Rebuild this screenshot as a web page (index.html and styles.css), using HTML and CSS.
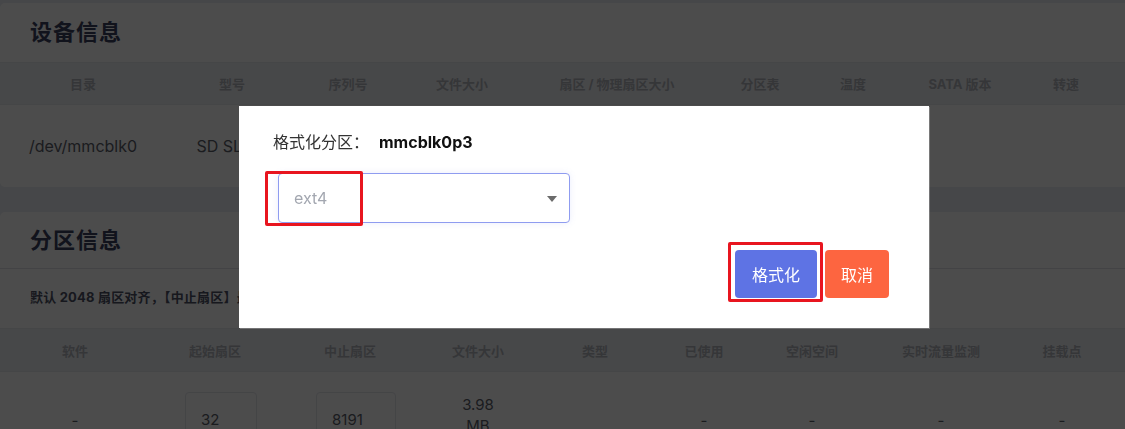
FILE: index.html
```html
<!DOCTYPE html>
<html lang="zh-CN">
<head>
<meta charset="utf-8">
<title>磁盘管理</title>
<link rel="stylesheet" href="styles.css">
</head>
<body>
<div class="page">
  <section class="card card-dev">
    <h2 class="card-title">设备信息</h2>
    <table class="tbl">
      <colgroup>
        <col class="w166"><col class="w132"><col class="w100"><col class="w128"><col class="w182"><col class="w104"><col class="w82"><col class="w132"><col class="w80"><col>
      </colgroup>
      <thead>
        <tr><th>目录</th><th>型号</th><th>序列号</th><th>文件大小</th><th>扇区 / 物理扇区大小</th><th>分区表</th><th>温度</th><th>SATA 版本</th><th>转速</th><th></th></tr>
      </thead>
      <tbody>
        <tr class="row-dev"><td>/dev/mmcblk0</td><td class="model">SD SL32G</td><td>0x5b3e9f12</td><td>29.72 GB</td><td>512 B / 512 B</td><td>GPT</td><td></td><td></td><td></td><td></td></tr>
      </tbody>
    </table>
  </section>

  <section class="card card-part">
    <h2 class="card-title sep">分区信息</h2>
    <p class="note">默认 2048 扇区对齐，【中止扇区】最大值为 62333951，默认为最大值</p>
    <table class="tbl">
      <colgroup>
        <col class="w150"><col class="w130"><col class="w140"><col class="w116"><col class="w118"><col class="w100"><col class="w116"><col class="w142"><col class="w100"><col>
      </colgroup>
      <thead>
        <tr><th>软件</th><th>起始扇区</th><th>中止扇区</th><th>文件大小</th><th>类型</th><th>已使用</th><th>空闲空间</th><th>实时流量监测</th><th>挂载点</th><th></th></tr>
      </thead>
      <tbody>
        <tr class="row-part">
          <td>-</td>
          <td><span class="num-input w72">32</span></td>
          <td><span class="num-input w80">8191</span></td>
          <td><span class="size">3.98 MB</span></td>
          <td></td>
          <td>-</td>
          <td>-</td>
          <td>-</td>
          <td>-</td>
          <td></td>
        </tr>
      </tbody>
    </table>
  </section>
</div>

<div class="overlay">
  <div class="modal">
    <div class="modal-title">格式化分区：<b class="part-name">mmcblk0p3</b></div>
    <div class="select">
      <span class="placeholder">ext4</span>
      <svg class="caret" width="10" height="6" viewBox="0 0 10 6"><path d="M0 0 L10 0 L5 6 Z" fill="#6b6b6b"/></svg>
    </div>
    <div class="actions">
      <button class="btn btn-primary">格式化</button>
      <button class="btn btn-danger">取消</button>
    </div>
    <div class="mark mark-select"></div>
    <div class="mark mark-btn"></div>
  </div>
</div>
</body>
</html>
```

FILE: styles.css
```css
html, body {
  margin: 0;
  padding: 0;
}
body {
  background: #eaedf3;
  font-family: "Inter", "Noto Sans CJK SC", sans-serif;
  overflow: hidden;
  width: 1125px;
  height: 429px;
}
.page {
  width: 1140px;
  padding-top: 3px;
  display: flex;
  flex-direction: column;
  gap: 25px;
}
.card {
  background: #ffffff;
  border-radius: 5px;
}
.card-title {
  margin: 0;
  padding: 0 30px;
  height: 59px;
  line-height: 59px;
  font-size: 22px;
  font-weight: 700;
  letter-spacing: 1px;
  color: #3b4160;
}
.card-part .card-title {
  height: 56px;
  line-height: 56px;
}
.card-title.sep {
  border-bottom: 1px solid #dfe2e8;
}
.note {
  margin: 0;
  padding: 0 30px;
  height: 59px;
  line-height: 57px;
  font-size: 13px;
  font-weight: 700;
  letter-spacing: 0.2px;
  color: #4d5266;
}
.tbl {
  border-collapse: collapse;
  table-layout: fixed;
  width: 1140px;
}
.tbl th {
  background: #eff1f5;
  height: 41px;
  padding: 0;
  font-size: 13px;
  font-weight: 700;
  color: #b3b6bd;
  text-align: center;
  border-top: 1px solid #e6e9ee;
  border-bottom: 1px solid #e6e9ee;
}
.card-part .tbl th {
  height: 42px;
}
.tbl td {
  padding: 0;
  text-align: center;
  font-size: 15px;
  color: #5a5e6a;
  vertical-align: middle;
  white-space: nowrap;
}
.row-dev td {
  height: 82px;
  font-size: 16px;
}
.row-dev td.model {
  padding-left: 6px;
}
.row-part td {
  height: 96px;
}
.w166 { width: 166px; }
.w132 { width: 132px; }
.w100 { width: 100px; }
.w128 { width: 128px; }
.w182 { width: 182px; }
.w104 { width: 104px; }
.w82 { width: 82px; }
.w80 { width: 80px; }
.w150 { width: 150px; }
.w130 { width: 130px; }
.w140 { width: 140px; }
.w116 { width: 116px; }
.w118 { width: 118px; }
.w142 { width: 142px; }
.num-input {
  display: inline-block;
  box-sizing: border-box;
  height: 56px;
  line-height: 54px;
  padding-left: 15px;
  text-align: left;
  border: 1px solid #e3e6ec;
  border-radius: 4px;
  vertical-align: middle;
}
.num-input.w72 { width: 72px; margin-left: 12px; }
.num-input.w80 { width: 80px; margin-left: 12px; }
.size {
  display: inline-block;
  width: 50px;
  white-space: normal;
  line-height: 21px;
  vertical-align: middle;
  margin-bottom: 10px;
}

.overlay {
  position: fixed;
  inset: 0;
  background: rgba(0, 0, 0, 0.7);
}
.modal {
  position: absolute;
  left: 239px;
  top: 106px;
  width: 690px;
  height: 222px;
  box-sizing: border-box;
  background: #ffffff;
  padding: 26px 40px 0 34px;
  box-shadow: 1px 1px 0 rgba(255, 255, 255, 0.25);
}
.modal-title {
  font-size: 16px;
  line-height: 20px;
  color: #333333;
}
.part-name {
  font-weight: 700;
  color: #111111;
  margin-left: 10px;
}
.select {
  margin: 21px 0 0 5px;
  width: 292px;
  height: 50px;
  box-sizing: border-box;
  border: 1px solid #8f9cf0;
  border-radius: 4px;
  display: flex;
  align-items: center;
  justify-content: space-between;
  padding: 0 12px 0 15px;
  box-shadow: 0 0 6px rgba(120, 135, 235, 0.15);
}
.placeholder {
  font-size: 16px;
  color: #a3a7b0;
}
.caret {
  margin-top: 1px;
}
.actions {
  display: flex;
  justify-content: flex-end;
  gap: 8px;
  margin-top: 27px;
}
.btn {
  height: 48px;
  border: none;
  border-radius: 4px;
  color: #ffffff;
  font-family: "Inter", "Noto Sans CJK SC", sans-serif;
  font-size: 16px;
  padding: 0;
}
.btn-primary {
  width: 82px;
  background: #5e73e4;
}
.btn-danger {
  width: 64px;
  background: #fd6540;
}
.mark {
  position: absolute;
  border: 3px solid #e8151f;
  border-radius: 2px;
  box-sizing: border-box;
}
.mark-select {
  left: 26px;
  top: 65px;
  width: 98px;
  height: 55px;
}
.mark-btn {
  left: 489px;
  top: 136px;
  width: 95px;
  height: 60px;
}
```
